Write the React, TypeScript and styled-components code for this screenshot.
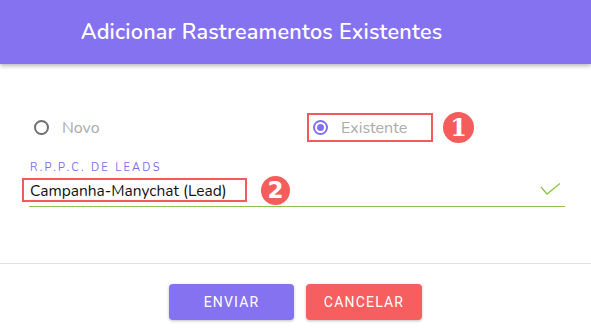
import React from "react";
import styled, { createGlobalStyle } from "styled-components";

const Global = createGlobalStyle`
  html, body { margin: 0; padding: 0; background: #ffffff; }
  body { font-family: "Nunito", "Lato", "Open Sans", sans-serif; }
  * { box-sizing: border-box; }
`;

const Page = styled.div`
  width: 591px;
  height: 333px;
  background: #fff;
  overflow: hidden;
`;

const Header = styled.header`
  height: 64px;
  background: #8572f0;
  box-shadow: 0 2px 4px rgba(0, 0, 0, 0.28);
  display: flex;
  align-items: center;
  justify-content: center;
  padding-right: 68px;
  color: #fff;
  font-size: 21.6px;
  font-weight: 600;
  letter-spacing: 0.2px;
  position: relative;
  z-index: 1;
`;

const Body = styled.div`
  padding: 48px 26px 0 22px;
  height: 200px;
  border-bottom: 1px solid #e2e2e2;
`;

const RadioRow = styled.div`
  display: grid;
  grid-template-columns: 285px 1fr;
  align-items: center;
  height: 29px;
`;

const OptionWrap = styled.div`
  display: flex;
  align-items: center;
  gap: 10px;
`;

const Option = styled.label<{ $marked?: boolean }>`
  display: inline-flex;
  align-items: center;
  gap: 13px;
  height: 29px;
  padding: 0 ${(p) => (p.$marked ? "24px" : "0")} 0 ${(p) => (p.$marked ? "4px" : "10px")};
  border: ${(p) => (p.$marked ? "2px solid #f25a5c" : "2px solid transparent")};
  color: #ababab;
  font-size: 16px;
`;

const Radio = styled.span<{ $checked?: boolean }>`
  width: 15px;
  height: 15px;
  border-radius: 50%;
  border: 2px solid ${(p) => (p.$checked ? "#8572f0" : "#6f6f6f")};
  display: inline-flex;
  align-items: center;
  justify-content: center;
  &::after {
    content: "";
    width: 7px;
    height: 7px;
    border-radius: 50%;
    background: ${(p) => (p.$checked ? "#8572f0" : "transparent")};
  }
`;

const Badge = styled.span<{ $size: number }>`
  width: ${(p) => p.$size}px;
  height: ${(p) => p.$size}px;
  border-radius: 50%;
  background: #f55d5d;
  color: #fff;
  font-family: "DejaVu Serif", serif;
  font-weight: 700;
  font-size: ${(p) => Math.round(p.$size * 0.78)}px;
  display: inline-flex;
  align-items: center;
  justify-content: center;
  line-height: 1;
  flex: none;
`;

const BadgeSans = styled(Badge)`
  font-family: "DejaVu Sans", sans-serif;
  font-size: 23px;
`;

const Field = styled.div`
  margin: 20px 0 0 7px;
`;

const FieldLabel = styled.div`
  color: #7f6ef0;
  font-size: 11px;
  letter-spacing: 2.3px;
  line-height: 13px;
  padding-left: 1px;
`;

const InputRow = styled.div`
  display: flex;
  align-items: center;
  margin-top: 4px;
  margin-left: -7px;
  height: 24px;
  position: relative;
`;

const ValueBox = styled.div`
  height: 24px;
  width: 225px;
  border: 2px solid #f25a5c;
  display: flex;
  align-items: center;
  padding-left: 6px;
  color: #111;
  font-size: 15.5px;
  margin-right: 14px;
`;

const Check = styled.svg`
  margin-left: auto;
  margin-right: 3px;
`;

const Underline = styled.div`
  height: 1px;
  background: #8bc34a;
  margin-top: 4px;
  position: relative;
  z-index: 2;
`;

const Actions = styled.div`
  display: flex;
  justify-content: center;
  gap: 12px;
  padding-top: 20px;
`;

const Button = styled.button<{ $tone: "primary" | "danger"; $w: number }>`
  width: ${(p) => p.$w}px;
  height: 36px;
  border: none;
  border-radius: 4px;
  background: ${(p) => (p.$tone === "primary" ? "#8572f0" : "#f75e5f")};
  color: #fff;
  font-family: "Roboto", "Liberation Sans", sans-serif;
  font-size: 14px;
  letter-spacing: 1.2px;
  box-shadow: 0 1px 3px rgba(0, 0, 0, 0.25);
  cursor: pointer;
`;

export default function App() {
  return (
    <Page>
      <Global />
      <Header>Adicionar Rastreamentos Existentes</Header>
      <Body>
        <RadioRow>
          <OptionWrap>
            <Option>
              <Radio />
              Novo
            </Option>
          </OptionWrap>
          <OptionWrap>
            <Option $marked>
              <Radio $checked />
              Existente
            </Option>
            <Badge $size={31}>1</Badge>
          </OptionWrap>
        </RadioRow>
        <Field>
          <FieldLabel>R.P.P.C. DE LEADS</FieldLabel>
          <InputRow>
            <ValueBox>Campanha-Manychat (Lead)</ValueBox>
            <BadgeSans $size={29}>2</BadgeSans>
            <Check width="22" height="15" viewBox="0 0 22 15">
              <polyline
                points="1,4 7,11 20,0.5"
                fill="none"
                stroke="#8bc34a"
                strokeWidth="1.3"
              />
            </Check>
          </InputRow>
          <Underline />
        </Field>
      </Body>
      <Actions>
        <Button $tone="primary" $w={125}>ENVIAR</Button>
        <Button $tone="danger" $w={116}>CANCELAR</Button>
      </Actions>
    </Page>
  );
}
